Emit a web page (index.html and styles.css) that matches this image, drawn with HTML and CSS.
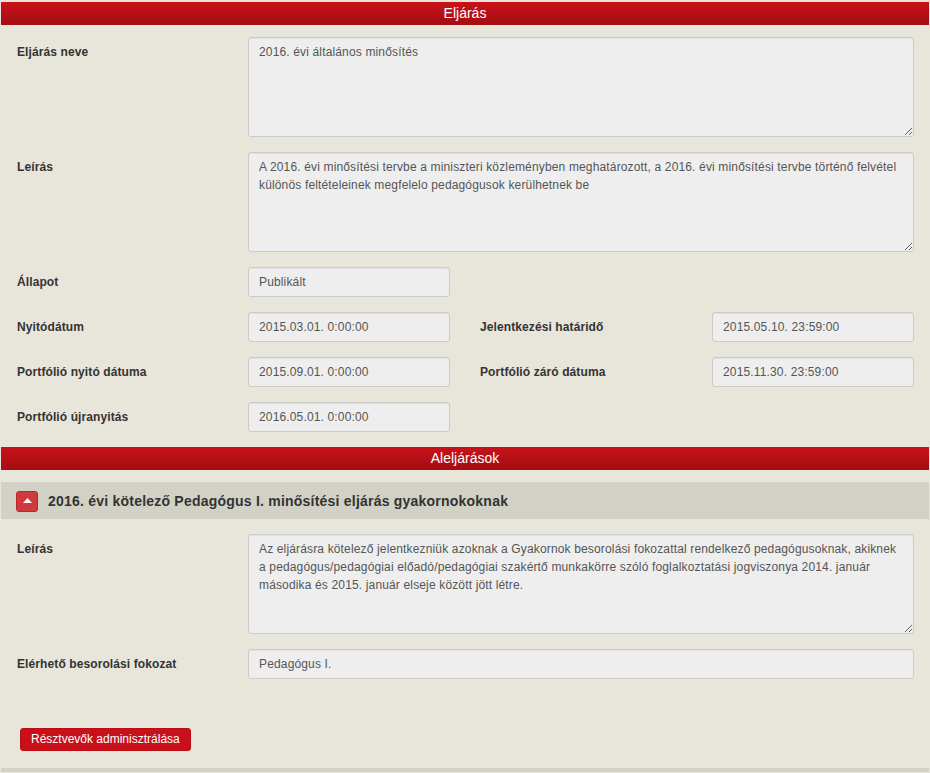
FILE: index.html
```html
<!DOCTYPE html>
<html lang="hu">
<head>
<meta charset="utf-8">
<title>Eljárás</title>
<link rel="stylesheet" href="styles.css">
</head>
<body>
<div class="page">
  <div class="bar">Eljárás</div>
  <div class="form">
    <div class="row">
      <label class="lbl">Eljárás neve</label>
      <textarea class="ctl area wide" readonly>2016. évi általános minősítés</textarea>
    </div>
    <div class="row">
      <label class="lbl">Leírás</label>
      <textarea class="ctl area wide" readonly>A 2016. évi minősítési tervbe a miniszteri közleményben meghatározott, a 2016. évi minősítési tervbe történő felvétel különös feltételeinek megfelelo pedagógusok kerülhetnek be</textarea>
    </div>
    <div class="row">
      <label class="lbl">Állapot</label>
      <div class="ctl inp">Publikált</div>
    </div>
    <div class="row">
      <label class="lbl">Nyitódátum</label>
      <div class="ctl inp">2015.03.01. 0:00:00</div>
      <span></span>
      <label class="lbl">Jelentkezési határidő</label>
      <div class="ctl inp">2015.05.10. 23:59:00</div>
    </div>
    <div class="row">
      <label class="lbl">Portfólió nyitó dátuma</label>
      <div class="ctl inp">2015.09.01. 0:00:00</div>
      <span></span>
      <label class="lbl">Portfólió záró dátuma</label>
      <div class="ctl inp">2015.11.30. 23:59:00</div>
    </div>
    <div class="row">
      <label class="lbl">Portfólió újranyitás</label>
      <div class="ctl inp">2016.05.01. 0:00:00</div>
    </div>
  </div>
  <div class="bar">Aleljárások</div>
  <div class="sub">
    <div class="sub-head">
      <span class="toggle"><svg width="9" height="5" viewBox="0 0 9 5"><path d="M0 5 L4.5 0 L9 5 Z" fill="#fff"/></svg></span>
      <h2 class="sub-title">2016. évi kötelező Pedagógus I. minősítési eljárás gyakornokoknak</h2>
    </div>
    <div class="form sub-form">
      <div class="row">
        <label class="lbl">Leírás</label>
        <textarea class="ctl area wide" readonly>Az eljárásra kötelező jelentkezniük azoknak a Gyakornok besorolási fokozattal rendelkező pedagógusoknak, akiknek a pedagógus/pedagógiai előadó/pedagógiai szakértő munkakörre szóló foglalkoztatási jogviszonya 2014. január másodika és 2015. január elseje között jött létre.</textarea>
      </div>
      <div class="row">
        <label class="lbl">Elérhető besorolási fokozat</label>
        <div class="ctl inp wide">Pedagógus I.</div>
      </div>
      <div class="actions">
        <button class="btn" type="button">Résztvevők adminisztrálása</button>
      </div>
    </div>
  </div>
  <div class="foot"></div>
</div>
</body>
</html>
```
FILE: styles.css
```css
* { box-sizing: border-box; }
html, body { margin: 0; padding: 0; background: #e8e5da; }
body {
  font-family: "Liberation Sans", Arial, sans-serif;
  font-size: 12px;
  color: #333;
}
.page {
  width: 930px;
  height: 773px;
  padding: 2px 1px 0 1px;
  background: #e8e5da;
  overflow: hidden;
}
.bar {
  height: 23px;
  line-height: 23px;
  text-align: center;
  color: #fff;
  font-size: 14px;
  background: linear-gradient(to bottom, #c91219, #a30d11);
}
.form {
  padding: 12px 15px 15px 16px;
  display: flex;
  flex-direction: column;
  gap: 15px;
}
.row {
  display: grid;
  grid-template-columns: 231px 202px 30px 232px 202px;
  align-items: start;
}
.lbl {
  font-weight: bold;
  padding-top: 7px;
  line-height: 17px;
  color: #333;
  letter-spacing: 0.1px;
}
.ctl {
  background: #eeeeee;
  border: 1px solid #cbcbc8;
  border-radius: 3px;
  color: #555;
  font-family: "Liberation Sans", Arial, sans-serif;
  font-size: 12px;
  letter-spacing: 0.15px;
  padding: 6px 10px;
  line-height: 18px;
  margin: 0;
  box-shadow: inset 0 1px 1px rgba(0,0,0,0.06);
}
.inp { height: 30px; padding-top: 5px; }
.area {
  height: 100px;
  resize: vertical;
  display: block;
  width: 100%;
  padding-top: 5px;
  outline: none;
}
.wide { grid-column: 2 / 6; }
.sub { padding-top: 12px; }
.sub-head {
  background: #d2d1c6;
  height: 37px;
  display: flex;
  align-items: center;
  padding-left: 15px;
  gap: 10px;
}
.toggle {
  width: 22px;
  height: 21px;
  background: #d03a3e;
  border: 1px solid #b8292d;
  border-radius: 3px;
  display: flex;
  align-items: center;
  justify-content: center;
  margin-top: 1px;
}
.toggle svg { display: block; margin-top: -1px; }
.sub-title {
  margin: 0;
  font-size: 14px;
  font-weight: bold;
  color: #333;
  letter-spacing: 0.22px;
}
.sub-form { padding-top: 15px; padding-bottom: 0; }
.actions { padding: 34px 0 0 3px; }
.btn {
  font-family: "Liberation Sans", Arial, sans-serif;
  font-size: 12px;
  color: #fff;
  background: #c8101a;
  border: 1px solid #b90e16;
  border-radius: 3px;
  padding: 1px 10px 2px;
  line-height: 18px;
  height: 23px;
  cursor: pointer;
}
.foot {
  margin-top: 17px;
  height: 4px;
  background: #d2d1c6;
}
```
